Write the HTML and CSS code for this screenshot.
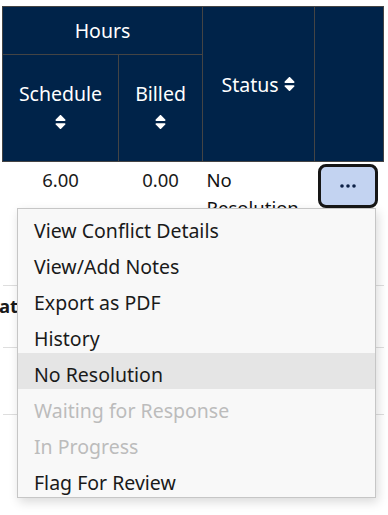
FILE: index.html
```html
<!DOCTYPE html>
<html lang="en">
<head>
    <meta charset="UTF-8">
    <meta name="viewport" content="width=device-width, initial-scale=1.0">
    <link rel="stylesheet" href="styles.css">
    <title>Conflicts</title>
</head>
<body>
<div class="page">
    <table class="grid">
        <colgroup>
            <col class="c-sched">
            <col class="c-billed">
            <col class="c-status">
            <col class="c-act">
        </colgroup>
        <thead>
            <tr class="h1">
                <th colspan="2">Hours</th>
                <th rowspan="2"><span class="lbl">Status <svg class="sort" viewBox="0 0 320 512"><path d="M41 288h238c21.4 0 32.1 25.9 17 41L177 448c-9.4 9.4-24.6 9.4-33.9 0L24 329c-15.1-15.1-4.4-41 17-41zm255-105L177 64c-9.4-9.4-24.6-9.4-33.9 0L24 183c-15.1 15.1-4.4 41 17 41h238c21.4 0 32.1-25.9 17-41z"/></svg></span></th>
                <th rowspan="2"></th>
            </tr>
            <tr class="h2">
                <th><div class="stack">Schedule<svg class="sort" viewBox="0 0 320 512"><path d="M41 288h238c21.4 0 32.1 25.9 17 41L177 448c-9.4 9.4-24.6 9.4-33.9 0L24 329c-15.1-15.1-4.4-41 17-41zm255-105L177 64c-9.4-9.4-24.6-9.4-33.9 0L24 183c-15.1 15.1-4.4 41 17 41h238c21.4 0 32.1-25.9 17-41z"/></svg></div></th>
                <th><div class="stack">Billed<svg class="sort" viewBox="0 0 320 512"><path d="M41 288h238c21.4 0 32.1 25.9 17 41L177 448c-9.4 9.4-24.6 9.4-33.9 0L24 329c-15.1-15.1-4.4-41 17-41zm255-105L177 64c-9.4-9.4-24.6-9.4-33.9 0L24 183c-15.1 15.1-4.4 41 17 41h238c21.4 0 32.1-25.9 17-41z"/></svg></div></th>
            </tr>
        </thead>
        <tbody>
            <tr class="r1">
                <td class="num">6.00</td>
                <td class="num">0.00</td>
                <td class="txt">No Resolution</td>
                <td class="act"><button class="more"><svg viewBox="0 0 16 4"><circle cx="2" cy="2" r="1.8"/><circle cx="8" cy="2" r="1.8"/><circle cx="14" cy="2" r="1.8"/></svg></button></td>
            </tr>
            <tr class="r2">
                <td class="bold"><span>Date</span></td>
                <td></td><td></td><td></td>
            </tr>
            <tr class="r3"><td></td><td></td><td></td><td></td></tr>
            <tr class="r4"><td></td><td></td><td></td><td></td></tr>
        </tbody>
    </table>

    <ul class="menu">
        <li>View Conflict Details</li>
        <li>View/Add Notes</li>
        <li>Export as PDF</li>
        <li>History</li>
        <li class="on">No Resolution</li>
        <li class="off">Waiting for Response</li>
        <li class="off">In Progress</li>
        <li>Flag For Review</li>
    </ul>
</div>
</body>
</html>
```

FILE: styles.css
```css
html, body
{
    margin: 0;
    padding: 0;
    background: #fff;
}

body
{
    font-family: "Noto Sans", "Open Sans", sans-serif;
    color: #1a1a1a;
}

.page
{
    position: relative;
    width: 388px;
    height: 515px;
    overflow: hidden;
    padding-top: 6px;
    box-sizing: border-box;
}

.grid
{
    border-collapse: collapse;
    table-layout: fixed;
    width: 381px;
    margin-left: 2px;
}

.c-sched { width: 116px; }
.c-billed { width: 84px; }
.c-status { width: 112px; }
.c-act { width: 69px; }

.grid th
{
    background: #002349;
    color: #fff;
    font-weight: normal;
    font-size: 19.5px;
    border: 1px solid #444;
    padding: 0;
    text-align: center;
    vertical-align: middle;
}

.h1 th
{
    height: 47px;
}

.h2 th
{
    height: 106px;
}

.stack
{
    display: flex;
    flex-direction: column;
    align-items: center;
    gap: 6px;
    padding-bottom: 5px;
}

.sort
{
    width: 13px;
    height: 18px;
    fill: #fff;
}

.lbl
{
    display: inline-flex;
    align-items: center;
    gap: 4px;
}

.grid td
{
    padding: 0;
    font-size: 18.5px;
    border-bottom: 1px solid #dedede;
    vertical-align: top;
}

.r1 td
{
    height: 123px;
}

.r2 td
{
    height: 61px;
}

.r3 td
{
    height: 66px;
}

.r4 td
{
    height: 120px;
}

.num
{
    text-align: center;
    line-height: 26px;
    padding-top: 5px !important;
    height: 118px !important;
}

.txt
{
    padding: 4px 10px 0 4px !important;
    height: 119px !important;
    line-height: 28px;
    color: #111;
}

.act
{
    text-align: center;
}

.bold
{
    font-weight: bold;
    white-space: nowrap;
    text-indent: -17px;
    padding-top: 7px !important;
    height: 54px !important;
    line-height: 26px;
}

.more
{
    width: 60px;
    height: 44px;
    margin: 2px 0 0 3px;
    background: #c3d3f1;
    border: 3px solid #161616;
    border-radius: 8px;
    display: flex;
    align-items: center;
    justify-content: center;
    padding: 0;
}

.more svg
{
    width: 16px;
    height: 4px;
    fill: #0d2147;
}

.menu
{
    position: absolute;
    left: 17px;
    top: 208px;
    width: 357px;
    margin: 0;
    padding: 0;
    list-style: none;
    background: #f8f8f8;
    border: 1px solid #c6c6c6;
    box-shadow: 2px 4px 10px rgba(0, 0, 0, 0.15);
}

.menu li
{
    height: 36px;
    box-sizing: border-box;
    padding-top: 7px;
    line-height: 29px;
    padding-left: 16px;
    font-size: 19.5px;
    color: #1a1a1a;
}

.menu li.on
{
    background: #e5e5e5;
}

.menu li.off
{
    color: #bcbcbc;
}
```
